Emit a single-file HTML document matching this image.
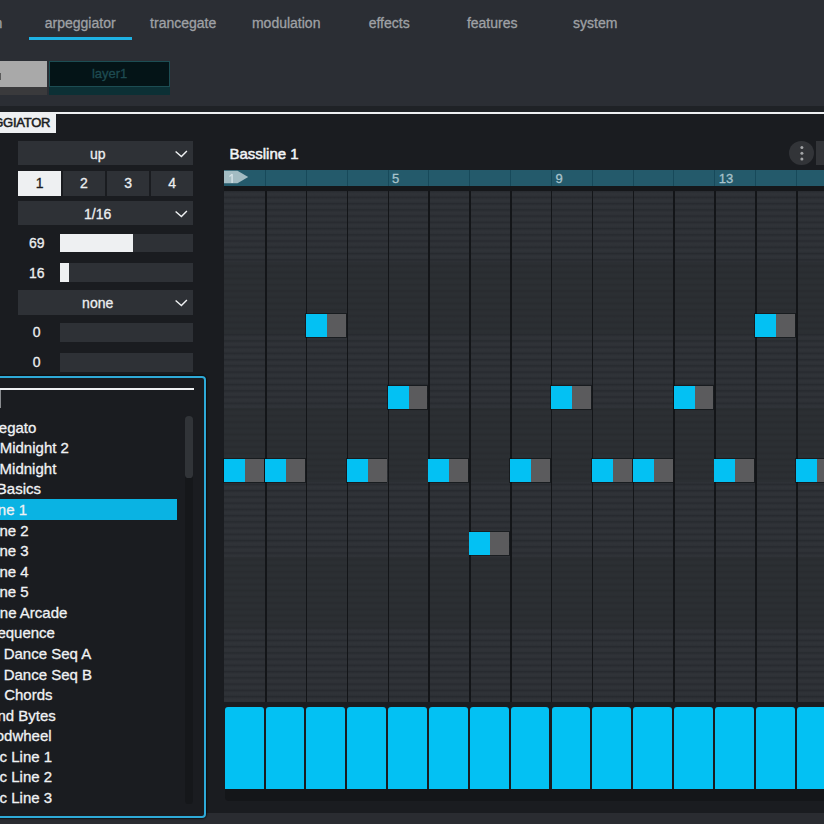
<!DOCTYPE html>
<html><head><meta charset="utf-8"><style>
html,body{margin:0;padding:0;}
body{width:824px;height:824px;overflow:hidden;position:relative;background:#1a1c20;font-family:'Liberation Sans', sans-serif;}
body>div,body>svg{position:absolute;}
</style></head><body>
<div style="left:0.00px;top:0.00px;width:824.00px;height:106.00px;background:#2b2e34;"></div>
<div style="left:0.00px;top:106.00px;width:824.00px;height:6.00px;background:#1f2226;"></div>
<div style="left:0.00px;top:112.00px;width:824.00px;height:2.20px;background:#eef0f2;"></div>
<div style="left:0.00px;top:114.20px;width:824.00px;height:698.40px;background:#1a1c20;"></div>
<div style="left:0.00px;top:812.60px;width:824.00px;height:11.40px;background:#2a2c31;"></div>
<div style="left:-5.50px;top:13.15px;height:20px;line-height:20px;font-size:14px;color:#9fa1a5;white-space:nowrap;-webkit-text-stroke:0.3px #9fa1a5;">n</div>
<div style="left:28.70px;top:13.15px;height:20px;line-height:20px;font-size:14px;color:#9fa1a5;white-space:nowrap;-webkit-text-stroke:0.3px #9fa1a5;width:103.00px;text-align:center;">arpeggiator</div>
<div style="left:131.70px;top:13.15px;height:20px;line-height:20px;font-size:14px;color:#9fa1a5;white-space:nowrap;-webkit-text-stroke:0.3px #9fa1a5;width:103.00px;text-align:center;">trancegate</div>
<div style="left:234.70px;top:13.15px;height:20px;line-height:20px;font-size:14px;color:#9fa1a5;white-space:nowrap;-webkit-text-stroke:0.3px #9fa1a5;width:103.00px;text-align:center;">modulation</div>
<div style="left:337.70px;top:13.15px;height:20px;line-height:20px;font-size:14px;color:#9fa1a5;white-space:nowrap;-webkit-text-stroke:0.3px #9fa1a5;width:103.00px;text-align:center;">effects</div>
<div style="left:440.70px;top:13.15px;height:20px;line-height:20px;font-size:14px;color:#9fa1a5;white-space:nowrap;-webkit-text-stroke:0.3px #9fa1a5;width:103.00px;text-align:center;">features</div>
<div style="left:543.70px;top:13.15px;height:20px;line-height:20px;font-size:14px;color:#9fa1a5;white-space:nowrap;-webkit-text-stroke:0.3px #9fa1a5;width:103.00px;text-align:center;">system</div>
<div style="left:29.00px;top:37.00px;width:103.00px;height:3.20px;background:#1eb1e3;"></div>
<div style="left:-10.00px;top:60.50px;width:57.20px;height:26.90px;background:#a9a9a9;"></div>
<div style="left:-10.00px;top:87.40px;width:57.20px;height:7.60px;background:#3a3a3c;"></div>
<div style="left:0.00px;top:73.00px;width:1.20px;height:6.50px;background:#5a5a5a;"></div>
<div style="left:49.30px;top:60.50px;width:120.70px;height:26.50px;background:#041417;border:1.5px solid #1c4d53;box-sizing:border-box;"></div>
<div style="left:49.30px;top:87.00px;width:120.70px;height:8.00px;background:#0c3035;"></div>
<div style="left:49.30px;top:63.50px;height:20px;line-height:20px;font-size:13px;color:#1e4b51;white-space:nowrap;-webkit-text-stroke:0.3px #1e4b51;width:120.70px;text-align:center;">layer1</div>
<div style="left:0.00px;top:112.00px;width:56.20px;height:20.60px;background:#eef0f2;"></div>
<div style="left:50.20px;top:113.40px;height:20px;line-height:20px;font-size:13px;color:#1b1d21;white-space:nowrap;-webkit-text-stroke:0.55px #1b1d21;width:0.00px;text-align:right;direction:rtl;letter-spacing:-0.25px;">ARPEGGIATOR</div>
<div style="left:18.20px;top:140.90px;width:175.00px;height:24.60px;background:#2e3136;"></div>
<div style="left:18.20px;top:143.75px;height:20px;line-height:20px;font-size:14px;color:#eceef0;white-space:nowrap;-webkit-text-stroke:0.3px #eceef0;width:159.00px;text-align:center;">up</div>
<svg style="left:170px;top:140.9px" width="24" height="25"><polyline points="5.6,10.4 11.4,15.6 16.9,10.0" fill="none" stroke="#eef0f2" stroke-width="1.4"/></svg>
<div style="left:18.20px;top:171.00px;width:42.70px;height:24.70px;background:#eef0f2;"></div>
<div style="left:18.20px;top:173.25px;height:20px;line-height:20px;font-size:14px;color:#1b1d21;white-space:nowrap;-webkit-text-stroke:0.3px #1b1d21;width:42.70px;text-align:center;">1</div>
<div style="left:62.50px;top:171.00px;width:42.80px;height:24.70px;background:#2e3136;"></div>
<div style="left:62.50px;top:173.25px;height:20px;line-height:20px;font-size:14px;color:#eceef0;white-space:nowrap;-webkit-text-stroke:0.3px #eceef0;width:42.80px;text-align:center;">2</div>
<div style="left:107.00px;top:171.00px;width:42.20px;height:24.70px;background:#2e3136;"></div>
<div style="left:107.00px;top:173.25px;height:20px;line-height:20px;font-size:14px;color:#eceef0;white-space:nowrap;-webkit-text-stroke:0.3px #eceef0;width:42.20px;text-align:center;">3</div>
<div style="left:151.30px;top:171.00px;width:41.90px;height:24.70px;background:#2e3136;"></div>
<div style="left:151.30px;top:173.25px;height:20px;line-height:20px;font-size:14px;color:#eceef0;white-space:nowrap;-webkit-text-stroke:0.3px #eceef0;width:41.90px;text-align:center;">4</div>
<div style="left:18.20px;top:200.80px;width:175.00px;height:24.50px;background:#2e3136;"></div>
<div style="left:18.20px;top:203.65px;height:20px;line-height:20px;font-size:14px;color:#eceef0;white-space:nowrap;-webkit-text-stroke:0.3px #eceef0;width:159.00px;text-align:center;">1/16</div>
<svg style="left:170px;top:200.8px" width="24" height="25"><polyline points="5.6,10.4 11.4,15.6 16.9,10.0" fill="none" stroke="#eef0f2" stroke-width="1.4"/></svg>
<div style="left:60.10px;top:233.50px;width:133.10px;height:18.50px;background:#2e3136;"></div>
<div style="left:60.10px;top:233.50px;width:73.10px;height:18.50px;background:#eef0f2;"></div>
<div style="left:10.00px;top:232.95px;height:20px;line-height:20px;font-size:14px;color:#eceef0;white-space:nowrap;-webkit-text-stroke:0.3px #eceef0;width:53.50px;text-align:center;">69</div>
<div style="left:60.10px;top:263.20px;width:133.10px;height:18.60px;background:#2e3136;"></div>
<div style="left:60.10px;top:263.20px;width:9.10px;height:18.60px;background:#eef0f2;"></div>
<div style="left:10.00px;top:262.65px;height:20px;line-height:20px;font-size:14px;color:#eceef0;white-space:nowrap;-webkit-text-stroke:0.3px #eceef0;width:53.50px;text-align:center;">16</div>
<div style="left:18.20px;top:290.00px;width:175.00px;height:25.00px;background:#2e3136;"></div>
<div style="left:18.20px;top:292.85px;height:20px;line-height:20px;font-size:14px;color:#eceef0;white-space:nowrap;-webkit-text-stroke:0.3px #eceef0;width:159.00px;text-align:center;">none</div>
<svg style="left:170px;top:290px" width="24" height="25"><polyline points="5.6,10.4 11.4,15.6 16.9,10.0" fill="none" stroke="#eef0f2" stroke-width="1.4"/></svg>
<div style="left:60.10px;top:323.00px;width:133.10px;height:18.80px;background:#2e3136;"></div>
<div style="left:10.00px;top:322.45px;height:20px;line-height:20px;font-size:14px;color:#eceef0;white-space:nowrap;-webkit-text-stroke:0.3px #eceef0;width:53.50px;text-align:center;">0</div>
<div style="left:60.10px;top:353.00px;width:133.10px;height:18.70px;background:#2e3136;"></div>
<div style="left:10.00px;top:352.45px;height:20px;line-height:20px;font-size:14px;color:#eceef0;white-space:nowrap;-webkit-text-stroke:0.3px #eceef0;width:53.50px;text-align:center;">0</div>
<div style="left:-20.00px;top:375.50px;width:226.30px;height:442.30px;background:#1a1c20;border:2.6px solid #2eaad8;border-radius:4px;box-sizing:border-box;box-shadow:0 0 1.5px 1px rgba(5,8,10,0.7);"></div>
<div style="left:-10.00px;top:387.70px;width:203.70px;height:2.60px;background:#eef0f2;"></div>
<div style="left:0.00px;top:390.30px;width:1.30px;height:17.70px;background:#8a8c90;"></div>
<div style="left:185.40px;top:416.30px;width:7.20px;height:387.40px;background:#15171a;border-radius:3.6px;"></div>
<div style="left:185.40px;top:416.30px;width:7.20px;height:61.70px;background:#313438;border-radius:3.6px;"></div>
<div style="left:-10.00px;top:499.20px;width:187.10px;height:20.80px;background:#0ab3e3;"></div>
<div style="left:-1.20px;top:417.60px;height:20px;line-height:20px;font-size:15px;color:#f0f2f4;white-space:nowrap;-webkit-text-stroke:0.3px #f0f2f4;">egato</div>
<div style="left:-0.30px;top:438.18px;height:20px;line-height:20px;font-size:15px;color:#f0f2f4;white-space:nowrap;-webkit-text-stroke:0.3px #f0f2f4;">Midnight 2</div>
<div style="left:-0.40px;top:458.76px;height:20px;line-height:20px;font-size:15px;color:#f0f2f4;white-space:nowrap;-webkit-text-stroke:0.3px #f0f2f4;">Midnight</div>
<div style="left:-3.20px;top:479.34px;height:20px;line-height:20px;font-size:15px;color:#f0f2f4;white-space:nowrap;-webkit-text-stroke:0.3px #f0f2f4;">Basics</div>
<div style="left:-2.20px;top:499.92px;height:20px;line-height:20px;font-size:15px;color:#f0f2f4;white-space:nowrap;-webkit-text-stroke:0.3px #f0f2f4;">ne 1</div>
<div style="left:-0.60px;top:520.50px;height:20px;line-height:20px;font-size:15px;color:#f0f2f4;white-space:nowrap;-webkit-text-stroke:0.3px #f0f2f4;">ne 2</div>
<div style="left:-0.60px;top:541.08px;height:20px;line-height:20px;font-size:15px;color:#f0f2f4;white-space:nowrap;-webkit-text-stroke:0.3px #f0f2f4;">ne 3</div>
<div style="left:-0.60px;top:561.66px;height:20px;line-height:20px;font-size:15px;color:#f0f2f4;white-space:nowrap;-webkit-text-stroke:0.3px #f0f2f4;">ne 4</div>
<div style="left:-0.60px;top:582.24px;height:20px;line-height:20px;font-size:15px;color:#f0f2f4;white-space:nowrap;-webkit-text-stroke:0.3px #f0f2f4;">ne 5</div>
<div style="left:-0.20px;top:602.82px;height:20px;line-height:20px;font-size:15px;color:#f0f2f4;white-space:nowrap;-webkit-text-stroke:0.3px #f0f2f4;">ne Arcade</div>
<div style="left:-2.60px;top:623.40px;height:20px;line-height:20px;font-size:15px;color:#f0f2f4;white-space:nowrap;-webkit-text-stroke:0.3px #f0f2f4;">equence</div>
<div style="left:3.70px;top:643.98px;height:20px;line-height:20px;font-size:15px;color:#f0f2f4;white-space:nowrap;-webkit-text-stroke:0.3px #f0f2f4;">Dance Seq A</div>
<div style="left:3.70px;top:664.56px;height:20px;line-height:20px;font-size:15px;color:#f0f2f4;white-space:nowrap;-webkit-text-stroke:0.3px #f0f2f4;">Dance Seq B</div>
<div style="left:4.20px;top:685.14px;height:20px;line-height:20px;font-size:15px;color:#f0f2f4;white-space:nowrap;-webkit-text-stroke:0.3px #f0f2f4;">Chords</div>
<div style="left:-2.60px;top:705.72px;height:20px;line-height:20px;font-size:15px;color:#f0f2f4;white-space:nowrap;-webkit-text-stroke:0.3px #f0f2f4;">nd Bytes</div>
<div style="left:-4.30px;top:726.30px;height:20px;line-height:20px;font-size:15px;color:#f0f2f4;white-space:nowrap;-webkit-text-stroke:0.3px #f0f2f4;">odwheel</div>
<div style="left:-0.40px;top:746.88px;height:20px;line-height:20px;font-size:15px;color:#f0f2f4;white-space:nowrap;-webkit-text-stroke:0.3px #f0f2f4;">c Line 1</div>
<div style="left:-0.40px;top:767.46px;height:20px;line-height:20px;font-size:15px;color:#f0f2f4;white-space:nowrap;-webkit-text-stroke:0.3px #f0f2f4;">c Line 2</div>
<div style="left:-0.40px;top:788.04px;height:20px;line-height:20px;font-size:15px;color:#f0f2f4;white-space:nowrap;-webkit-text-stroke:0.3px #f0f2f4;">c Line 3</div>
<div style="left:229.40px;top:144.00px;height:20px;line-height:20px;font-size:15px;color:#f2f4f6;white-space:nowrap;-webkit-text-stroke:0.3px #f2f4f6;-webkit-text-stroke:0.5px #f2f4f6;">Bassline 1</div>
<div style="left:789.4px;top:140.9px;width:24.6px;height:24.2px;border-radius:50%;background:#323438"></div>
<svg style="left:790px;top:140px" width="24" height="26"><circle cx="11.9" cy="7.5" r="1.5" fill="#a4a6a8"/><circle cx="11.9" cy="13.3" r="1.5" fill="#a4a6a8"/><circle cx="11.9" cy="19.1" r="1.5" fill="#a4a6a8"/></svg>
<div style="left:816.10px;top:141.20px;width:13.90px;height:23.90px;background:#323438;"></div>
<div style="left:224.00px;top:170.30px;width:606.00px;height:15.60px;background:#245a6b;"></div>
<div style="left:224.00px;top:185.90px;width:606.00px;height:4.90px;background:#15171a;"></div>
<div style="left:264.95px;top:170.40px;width:1.00px;height:15.70px;background:#17495a;"></div>
<div style="left:305.80px;top:170.40px;width:1.00px;height:15.70px;background:#17495a;"></div>
<div style="left:346.65px;top:170.40px;width:1.00px;height:15.70px;background:#17495a;"></div>
<div style="left:387.50px;top:170.40px;width:1.00px;height:15.70px;background:#17495a;"></div>
<div style="left:428.35px;top:170.40px;width:1.00px;height:15.70px;background:#17495a;"></div>
<div style="left:469.20px;top:170.40px;width:1.00px;height:15.70px;background:#17495a;"></div>
<div style="left:510.05px;top:170.40px;width:1.00px;height:15.70px;background:#17495a;"></div>
<div style="left:550.90px;top:170.40px;width:1.00px;height:15.70px;background:#17495a;"></div>
<div style="left:591.75px;top:170.40px;width:1.00px;height:15.70px;background:#17495a;"></div>
<div style="left:632.60px;top:170.40px;width:1.00px;height:15.70px;background:#17495a;"></div>
<div style="left:673.45px;top:170.40px;width:1.00px;height:15.70px;background:#17495a;"></div>
<div style="left:714.30px;top:170.40px;width:1.00px;height:15.70px;background:#17495a;"></div>
<div style="left:755.15px;top:170.40px;width:1.00px;height:15.70px;background:#17495a;"></div>
<div style="left:796.00px;top:170.40px;width:1.00px;height:15.70px;background:#17495a;"></div>
<div style="left:836.85px;top:170.40px;width:1.00px;height:15.70px;background:#17495a;"></div>
<div style="left:392.00px;top:168.70px;height:20px;line-height:20px;font-size:13px;color:#a8c3cb;white-space:nowrap;-webkit-text-stroke:0.3px #a8c3cb;">5</div>
<div style="left:555.40px;top:168.70px;height:20px;line-height:20px;font-size:13px;color:#a8c3cb;white-space:nowrap;-webkit-text-stroke:0.3px #a8c3cb;">9</div>
<div style="left:718.80px;top:168.70px;height:20px;line-height:20px;font-size:13px;color:#a8c3cb;white-space:nowrap;-webkit-text-stroke:0.3px #a8c3cb;">13</div>
<svg style="left:224px;top:170px" width="30" height="16"><polygon points="0,0.8 13.5,0.8 24.2,6.9 13.5,13.2 0,13.2" fill="#a3bcc3"/></svg>
<svg style="left:226px;top:172px" width="10" height="13"><path d="M6.1,2.2 V11" stroke="#d6e3e7" stroke-width="1.4" fill="none"/><path d="M6.3,2.3 L3.4,4.4" stroke="#d6e3e7" stroke-width="1.2" fill="none"/></svg>
<div style="left:224.00px;top:190.80px;width:606.00px;height:511.50px;background:#2d3035;background:repeating-linear-gradient(180deg,#25282d 0px,#2d3035 1.1px,#303338 3.1px,#2d3035 5.1px,#25282d 6.24px);background-position:0 0.26px;"></div>
<div style="left:224.00px;top:262.00px;width:606.00px;height:72.00px;background:rgba(42,45,49,0.62);"></div>
<div style="left:224.00px;top:408.00px;width:606.00px;height:74.00px;background:rgba(42,45,49,0.62);"></div>
<div style="left:224.00px;top:557.00px;width:606.00px;height:72.00px;background:rgba(42,45,49,0.62);"></div>
<div style="left:264.95px;top:190.80px;width:1.60px;height:511.50px;background:#131518;"></div>
<div style="left:305.80px;top:190.80px;width:1.60px;height:511.50px;background:#131518;"></div>
<div style="left:346.65px;top:190.80px;width:1.60px;height:511.50px;background:#131518;"></div>
<div style="left:387.50px;top:190.80px;width:1.60px;height:511.50px;background:#131518;"></div>
<div style="left:428.35px;top:190.80px;width:1.60px;height:511.50px;background:#131518;"></div>
<div style="left:469.20px;top:190.80px;width:1.60px;height:511.50px;background:#131518;"></div>
<div style="left:510.05px;top:190.80px;width:1.60px;height:511.50px;background:#131518;"></div>
<div style="left:550.90px;top:190.80px;width:1.60px;height:511.50px;background:#131518;"></div>
<div style="left:591.75px;top:190.80px;width:1.60px;height:511.50px;background:#131518;"></div>
<div style="left:632.60px;top:190.80px;width:1.60px;height:511.50px;background:#131518;"></div>
<div style="left:673.45px;top:190.80px;width:1.60px;height:511.50px;background:#131518;"></div>
<div style="left:714.30px;top:190.80px;width:1.60px;height:511.50px;background:#131518;"></div>
<div style="left:755.15px;top:190.80px;width:1.60px;height:511.50px;background:#131518;"></div>
<div style="left:796.00px;top:190.80px;width:1.60px;height:511.50px;background:#131518;"></div>
<div style="left:836.85px;top:190.80px;width:1.60px;height:511.50px;background:#131518;"></div>
<div style="left:305.10px;top:313.30px;width:41.45px;height:24.40px;background:rgba(10,12,14,0.55);"></div>
<div style="left:305.90px;top:314.10px;width:21.00px;height:22.80px;background:#03c1f3;"></div>
<div style="left:326.90px;top:314.10px;width:18.85px;height:22.80px;background:#5b5b5d;"></div>
<div style="left:754.45px;top:313.30px;width:41.45px;height:24.40px;background:rgba(10,12,14,0.55);"></div>
<div style="left:755.25px;top:314.10px;width:21.00px;height:22.80px;background:#03c1f3;"></div>
<div style="left:776.25px;top:314.10px;width:18.85px;height:22.80px;background:#5b5b5d;"></div>
<div style="left:386.80px;top:385.20px;width:41.45px;height:24.40px;background:rgba(10,12,14,0.55);"></div>
<div style="left:387.60px;top:386.00px;width:21.00px;height:22.80px;background:#03c1f3;"></div>
<div style="left:408.60px;top:386.00px;width:18.85px;height:22.80px;background:#5b5b5d;"></div>
<div style="left:550.20px;top:385.20px;width:41.45px;height:24.40px;background:rgba(10,12,14,0.55);"></div>
<div style="left:551.00px;top:386.00px;width:21.00px;height:22.80px;background:#03c1f3;"></div>
<div style="left:572.00px;top:386.00px;width:18.85px;height:22.80px;background:#5b5b5d;"></div>
<div style="left:672.75px;top:385.20px;width:41.45px;height:24.40px;background:rgba(10,12,14,0.55);"></div>
<div style="left:673.55px;top:386.00px;width:21.00px;height:22.80px;background:#03c1f3;"></div>
<div style="left:694.55px;top:386.00px;width:18.85px;height:22.80px;background:#5b5b5d;"></div>
<div style="left:223.40px;top:458.30px;width:41.45px;height:24.40px;background:rgba(10,12,14,0.55);"></div>
<div style="left:224.20px;top:459.10px;width:21.00px;height:22.80px;background:#03c1f3;"></div>
<div style="left:245.20px;top:459.10px;width:18.85px;height:22.80px;background:#5b5b5d;"></div>
<div style="left:264.25px;top:458.30px;width:41.45px;height:24.40px;background:rgba(10,12,14,0.55);"></div>
<div style="left:265.05px;top:459.10px;width:21.00px;height:22.80px;background:#03c1f3;"></div>
<div style="left:286.05px;top:459.10px;width:18.85px;height:22.80px;background:#5b5b5d;"></div>
<div style="left:345.95px;top:458.30px;width:41.45px;height:24.40px;background:rgba(10,12,14,0.55);"></div>
<div style="left:346.75px;top:459.10px;width:21.00px;height:22.80px;background:#03c1f3;"></div>
<div style="left:367.75px;top:459.10px;width:18.85px;height:22.80px;background:#5b5b5d;"></div>
<div style="left:427.65px;top:458.30px;width:41.45px;height:24.40px;background:rgba(10,12,14,0.55);"></div>
<div style="left:428.45px;top:459.10px;width:21.00px;height:22.80px;background:#03c1f3;"></div>
<div style="left:449.45px;top:459.10px;width:18.85px;height:22.80px;background:#5b5b5d;"></div>
<div style="left:509.35px;top:458.30px;width:41.45px;height:24.40px;background:rgba(10,12,14,0.55);"></div>
<div style="left:510.15px;top:459.10px;width:21.00px;height:22.80px;background:#03c1f3;"></div>
<div style="left:531.15px;top:459.10px;width:18.85px;height:22.80px;background:#5b5b5d;"></div>
<div style="left:591.05px;top:458.30px;width:41.45px;height:24.40px;background:rgba(10,12,14,0.55);"></div>
<div style="left:591.85px;top:459.10px;width:21.00px;height:22.80px;background:#03c1f3;"></div>
<div style="left:612.85px;top:459.10px;width:18.85px;height:22.80px;background:#5b5b5d;"></div>
<div style="left:631.90px;top:458.30px;width:41.45px;height:24.40px;background:rgba(10,12,14,0.55);"></div>
<div style="left:632.70px;top:459.10px;width:21.00px;height:22.80px;background:#03c1f3;"></div>
<div style="left:653.70px;top:459.10px;width:18.85px;height:22.80px;background:#5b5b5d;"></div>
<div style="left:713.60px;top:458.30px;width:41.45px;height:24.40px;background:rgba(10,12,14,0.55);"></div>
<div style="left:714.40px;top:459.10px;width:21.00px;height:22.80px;background:#03c1f3;"></div>
<div style="left:735.40px;top:459.10px;width:18.85px;height:22.80px;background:#5b5b5d;"></div>
<div style="left:795.30px;top:458.30px;width:41.45px;height:24.40px;background:rgba(10,12,14,0.55);"></div>
<div style="left:796.10px;top:459.10px;width:21.00px;height:22.80px;background:#03c1f3;"></div>
<div style="left:817.10px;top:459.10px;width:18.85px;height:22.80px;background:#5b5b5d;"></div>
<div style="left:468.50px;top:531.20px;width:41.45px;height:24.40px;background:rgba(10,12,14,0.55);"></div>
<div style="left:469.30px;top:532.00px;width:21.00px;height:22.80px;background:#03c1f3;"></div>
<div style="left:490.30px;top:532.00px;width:18.85px;height:22.80px;background:#5b5b5d;"></div>
<div style="left:224.00px;top:702.30px;width:606.00px;height:87.10px;background:#1a1c20;"></div>
<div style="left:224.70px;top:707.20px;width:38.85px;height:82.20px;background:#03c1f3;border-radius:3px 3px 0 0;"></div>
<div style="left:265.55px;top:707.20px;width:38.85px;height:82.20px;background:#03c1f3;border-radius:3px 3px 0 0;"></div>
<div style="left:306.40px;top:707.20px;width:38.85px;height:82.20px;background:#03c1f3;border-radius:3px 3px 0 0;"></div>
<div style="left:347.25px;top:707.20px;width:38.85px;height:82.20px;background:#03c1f3;border-radius:3px 3px 0 0;"></div>
<div style="left:388.10px;top:707.20px;width:38.85px;height:82.20px;background:#03c1f3;border-radius:3px 3px 0 0;"></div>
<div style="left:428.95px;top:707.20px;width:38.85px;height:82.20px;background:#03c1f3;border-radius:3px 3px 0 0;"></div>
<div style="left:469.80px;top:707.20px;width:38.85px;height:82.20px;background:#03c1f3;border-radius:3px 3px 0 0;"></div>
<div style="left:510.65px;top:707.20px;width:38.85px;height:82.20px;background:#03c1f3;border-radius:3px 3px 0 0;"></div>
<div style="left:551.50px;top:707.20px;width:38.85px;height:82.20px;background:#03c1f3;border-radius:3px 3px 0 0;"></div>
<div style="left:592.35px;top:707.20px;width:38.85px;height:82.20px;background:#03c1f3;border-radius:3px 3px 0 0;"></div>
<div style="left:633.20px;top:707.20px;width:38.85px;height:82.20px;background:#03c1f3;border-radius:3px 3px 0 0;"></div>
<div style="left:674.05px;top:707.20px;width:38.85px;height:82.20px;background:#03c1f3;border-radius:3px 3px 0 0;"></div>
<div style="left:714.90px;top:707.20px;width:38.85px;height:82.20px;background:#03c1f3;border-radius:3px 3px 0 0;"></div>
<div style="left:755.75px;top:707.20px;width:38.85px;height:82.20px;background:#03c1f3;border-radius:3px 3px 0 0;"></div>
<div style="left:796.60px;top:707.20px;width:38.85px;height:82.20px;background:#03c1f3;border-radius:3px 3px 0 0;"></div>
<div style="left:837.45px;top:707.20px;width:38.85px;height:82.20px;background:#03c1f3;border-radius:3px 3px 0 0;"></div>
<div style="left:225.00px;top:789.40px;width:605.00px;height:11.60px;background:#141619;border-radius:0 0 0 4px;"></div>
</body></html>
